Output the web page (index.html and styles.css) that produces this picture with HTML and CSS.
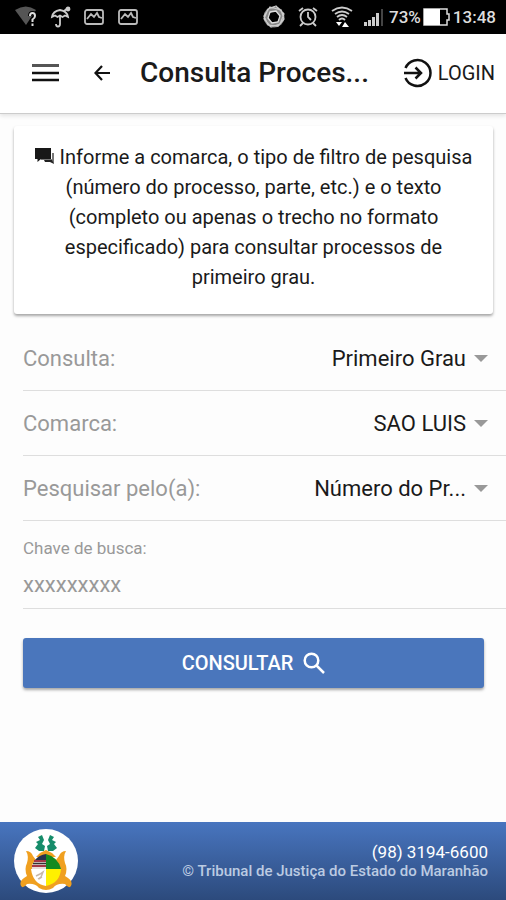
FILE: index.html
```html
<!DOCTYPE html>
<html lang="pt-BR">
<head>
    <meta charset="UTF-8">
    <meta name="viewport" content="width=device-width, initial-scale=1.0">
    <title>Consulta Processual</title>
    <link rel="stylesheet" href="styles.css">
</head>
<body>
    <div class="status-bar">
        <div class="status-left">
            <svg width="24" height="22" viewBox="0 0 24 22">
                <path d="M1 4 Q12 -3 22 4 L12 19 Z" fill="#555"/>
                <path d="M16 10 Q16 7 18.500 7 Q21 7 21 10 Q21 12 18.500 13.500 V16 M18.500 17.500 V20" fill="none" stroke="#000" stroke-width="4"/>
                <path d="M16 10 Q16 7 18.500 7 Q21 7 21 10 Q21 12 18.500 13.500 V16 M18.500 17.500 V20" fill="none" stroke="#ddd" stroke-width="2"/>
            </svg>
            <svg width="22" height="22" viewBox="0 0 22 22" fill="none" stroke="#ccc" stroke-width="1.800">
                <path d="M2 11 Q3 5 10 4 Q17 5 18 11 L15 9.500 L12.500 11 L10 9.500 L7.500 11 L5 9.500 Z"/>
                <path d="M10 10 V18 Q10 20.500 8 20.500 Q6 20.500 6 18 M14 5 L18 2"/>
                <circle cx="18" cy="3" r="1.500" fill="#ccc"/>
            </svg>
            <svg width="20" height="18" viewBox="0 0 20 18" fill="none" stroke="#bbb" stroke-width="1.800">
                <rect x="1" y="2" width="18" height="14" rx="2"/>
                <path d="M3 11 L7 6 L10 9 L13 5 L15 9 L18 10"/>
            </svg>
            <svg width="20" height="18" viewBox="0 0 20 18" fill="none" stroke="#bbb" stroke-width="1.800">
                <rect x="1" y="2" width="18" height="14" rx="2"/>
                <path d="M3 11 L7 6 L10 9 L13 5 L15 9 L18 10"/>
            </svg>
        </div>
        <div class="status-right">
            <svg width="24" height="24" viewBox="0 0 24 24" fill="none" stroke="#ccc">
                <circle cx="12" cy="12" r="8" stroke="#888" stroke-width="5"/>
                <path d="M8 2 L19 5 L22 14 L16 21 L6 20 L2 11 Z M14 1 L6 4 L2 14 L9 22 L18 19 L22 9 Z" stroke-width="1.200"/>
                <path d="M8 7 L14 6 L18 11 L16 17 L10 18 L6 13 Z" stroke="#ddd" stroke-width="1.300"/>
            </svg>
            <svg class="alarm" width="22" height="22" viewBox="0 0 22 22" fill="none" stroke="#ccc" stroke-width="1.800">
                <circle cx="11" cy="11" r="7.500"/>
                <path d="M11 6 V11 L14 14 M2 5 L6 2 M20 5 L16 2 M6 17 L3 20 M16 17 L19 20"/>
            </svg>
            <svg class="wifi" width="22" height="24" viewBox="0 0 22 24" fill="none" stroke="#ccc" stroke-width="1.800">
                <path d="M1 6 Q11 -1 21 6 M4 9 Q11 4 18 9 M6 12 Q11 8 16 12 M8 15 Q11 12 14 15"/>
                <path d="M5 17 H11 L8 21 Z M11 22 L14 17 L18 22 Z" fill="#fff" stroke="none"/>
            </svg>
            <svg class="signal" width="20" height="18" viewBox="0 0 20 18" fill="#ccc">
                <path d="M0 14 H3 V18 H0 Z M4 12 H7 V18 H4 Z M8 9 H11 V18 H8 Z M12 5 H15 V18 H12 Z"/>
                <path d="M17 1 H19 V18 H17 Z" fill="#444"/>
            </svg>
            <span class="battery-level">73%</span>
            <svg width="28" height="18" viewBox="0 0 28 18">
                <path d="M1 1 H24 V6 H26 V12 H24 V17 H1 Z" fill="none" stroke="#ddd" stroke-width="1.500"/>
                <path d="M1 1 H17 V17 H1 Z" fill="#fff"/>
            </svg>
            <span class="clock">13:48</span>
        </div>
    </div>

    <header class="header">
        <button class="icon-btn" aria-label="Menu">
            <svg width="27" height="20" viewBox="0 0 27 20">
                <path d="M0 2.500 H27" stroke="#555" stroke-width="3"/>
                <path d="M0 10 H27 M0 17 H27" stroke="#111" stroke-width="2.500"/>
            </svg>
        </button>
        <button class="icon-btn back-btn" aria-label="Voltar">
            <svg width="16" height="16" viewBox="0 0 16 16" fill="none" stroke="#111" stroke-width="2.200">
                <path d="M16 8 H1.500 M8 1 L1.500 8 L8 15"/>
            </svg>
        </button>
        <h1>Consulta Proces...</h1>
        <a class="login" href="#login">
            <svg width="30" height="30" viewBox="0 0 30 30" fill="none" stroke="#111" stroke-width="2.500">
                <path d="M2.500 10 A13 13 0 1 1 2.500 20 M1 15 H18 M12.500 9.500 L18 15 L12.500 20.500"/>
            </svg>
            LOGIN
        </a>
    </header>

    <main class="content">
        <div class="card">
            <p><svg width="20" height="16" viewBox="0 0 20 16">
                <path d="M6 12 H16 L19 16 V5 H17 V11 H6 Z" fill="#777"/>
                <path d="M0 0 H16 V11 H6 L2.500 14 V11 H0 Z" fill="#181818"/>
                <path d="M9 12 H17 L19 16 L15 14 H10 Z" fill="#222"/>
            </svg> Informe a comarca, o tipo de filtro de pesquisa (número do processo, parte, etc.) e o texto (completo ou apenas o trecho no formato especificado) para consultar processos de primeiro grau.</p>
        </div>

        <form class="form">
            <div class="row">
                <label for="consulta">Consulta:</label>
                <select id="consulta">
                    <option>Primeiro Grau</option>
                </select>
                <span class="arrow"></span>
            </div>
            <div class="row">
                <label for="comarca">Comarca:</label>
                <select id="comarca">
                    <option>SAO LUIS</option>
                </select>
                <span class="arrow"></span>
            </div>
            <div class="row">
                <label for="filtro">Pesquisar pelo(a):</label>
                <select id="filtro">
                    <option>Número do Pr...</option>
                </select>
                <span class="arrow"></span>
            </div>
            <div class="row row-input">
                <label for="chave">Chave de busca:</label>
                <input type="text" id="chave" placeholder="xxxxxxxxx">
            </div>

            <button type="button" class="submit-btn">
                CONSULTAR
                <svg width="22" height="22" viewBox="0 0 22 22" fill="none" stroke="#fff" stroke-width="2.500">
                    <circle cx="8.500" cy="8.500" r="6.800"/>
                    <path d="M13.500 13.500 L21 21"/>
                </svg>
            </button>
        </form>
    </main>

    <footer class="footer">
        <svg class="logo" width="64" height="64" viewBox="0 0 64 64">
            <circle cx="32" cy="32" r="32" fill="#fff"/>
            <path d="M12 22 Q17 22 19 27 L22 31 L42 31 L45 27 Q47 22 52 22 Q49 27 51 34 Q54 40 51 47 L54 49 Q59 52 57 57 Q55 60 51 55 Q43 54 39 59 Q32 63 25 59 Q21 54 13 55 Q9 60 7 57 Q5 52 10 49 L13 47 Q10 40 13 34 Q15 27 12 22 Z" fill="#f0a020"/>
            <path d="M22 28 L26 24 L32 21 L38 24 L42 28 Z" fill="#f0a020"/>
            <path d="M28 6 L24 8 L26 11 L22 13 L24 15 L21 19 L25 22 L30 22 L31 17 L28 15 L30 11 Z M36 6 L40 8 L38 11 L42 13 L40 15 L43 19 L39 22 L34 22 L33 17 L36 15 L34 11 Z" fill="#168c6a"/>
            <path d="M32 27 Q22 27 18 36 V41 H32 Z" fill="#e8dcdc"/>
            <path d="M20 32 H32 M18 37 H32" stroke="#a33848" stroke-width="2"/>
            <path d="M32 25 Q25 26 21 31 H32 Z" fill="#26324e"/>
            <path d="M19 34.500 H32" stroke="#333" stroke-width="1.500"/>
            <path d="M17 40 H32 V57 Q19 55 17 40 Z" fill="#fff"/>
            <path d="M22 47 L26 45 L29 43 L27 48 L24 50 M25 50 L28 48" stroke="#c8b8a8" stroke-width="1.500" fill="none"/>
            <path d="M32 25 Q44 28 47 40 H32 Z" fill="#138a20"/>
            <path d="M32 40 H47 Q46 54 32 57 Z" fill="#fff000"/>
        </svg>
        <div class="footer-text">
            <a class="phone" href="tel:+559831946600">(98) 3194-6600</a>
            <p>© Tribunal de Justiça do Estado do Maranhão</p>
        </div>
    </footer>
</body>
</html>
```

FILE: styles.css
```css
* {
    margin: 0;
    padding: 0;
    box-sizing: border-box;
}

body {
    font-family: Roboto, "Liberation Sans", sans-serif;
    background: #fdfdfd;
    color: #1a1a1a;
    min-height: 100vh;
    display: flex;
    flex-direction: column;
}

svg {
    flex-shrink: 0;
}

button, select, input {
    font-family: inherit;
    border: none;
    background: none;
}

a {
    color: inherit;
    text-decoration: none;
}

/* Android status bar */
.status-bar {
    height: 34px;
    padding: 0 10px 0 14px;
    background: #000;
    color: #ddd;
    display: flex;
    align-items: center;
    justify-content: space-between;
}

.status-left {
    display: flex;
    align-items: center;
    gap: 12px;
}

.status-left svg:last-child {
    margin-left: 2px;
}

.status-right {
    display: flex;
    align-items: center;
    font-size: 17px;
    font-weight: 500;
}

.alarm {
    margin-left: 11px;
}

.wifi {
    margin-left: 12px;
}

.signal {
    margin: 0 5px 0 11px;
}

.battery-level {
    margin-right: 2px;
}

.clock {
    margin-left: 2px;
}

/* Header */
.header {
    height: 80px;
    padding: 0 11px 2px 32px;
    background: #fff;
    border-bottom: 1px solid #ccc;
    box-shadow: 0 2px 4px rgba(0, 0, 0, 0.1);
    display: flex;
    align-items: center;
}

.icon-btn {
    display: flex;
    cursor: pointer;
}

.back-btn {
    margin-left: 35px;
}

.header h1 {
    flex: 1;
    margin-left: 30px;
    font-size: 28px;
    font-weight: 500;
    white-space: nowrap;
}

.login {
    display: flex;
    align-items: center;
    gap: 5px;
    font-size: 20px;
}

/* Content */
.content {
    flex: 1;
}

.card {
    margin: 12px 13px 12px 14px;
    padding: 16px 20px 22px;
    background: #fff;
    border-radius: 3px;
    box-shadow: 0 2px 3px rgba(0, 0, 0, 0.35);
    font-size: 20px;
    line-height: 30px;
    text-align: center;
}

.form {
    padding-left: 23px;
}

.row {
    height: 65px;
    padding-right: 18px;
    border-bottom: 1px solid #dedede;
    display: flex;
    align-items: center;
    font-size: 22px;
}

.row label {
    color: #999;
    white-space: nowrap;
}

.row select {
    flex: 1;
    min-width: 0;
    appearance: none;
    color: #1a1a1a;
    font-size: 22px;
    text-align-last: right;
}

.arrow {
    margin-left: 8px;
    border: 7px solid transparent;
    border-top-color: #999;
    border-bottom: none;
}

.row-input {
    height: 88px;
    padding-top: 6px;
    flex-direction: column;
    align-items: stretch;
    justify-content: center;
    gap: 14px;
}

.row-input label {
    font-size: 17px;
}

.row-input input {
    width: 100%;
    font-size: 22px;
    color: #1a1a1a;
    outline: none;
}

.row-input input::placeholder {
    color: #999;
}

.submit-btn {
    width: calc(100% - 22px);
    height: 50px;
    margin-top: 29px;
    background: #4a76bc;
    border-radius: 3px;
    box-shadow: 0 2px 3px rgba(0, 0, 0, 0.35);
    color: #fff;
    font-size: 20px;
    font-weight: 500;
    display: flex;
    align-items: center;
    justify-content: center;
    gap: 10px;
    cursor: pointer;
}

/* Footer */
.footer {
    height: 78px;
    padding: 0 18px 0 14px;
    background: linear-gradient(#4875bf, #2c4a7c);
    display: flex;
    align-items: center;
    justify-content: space-between;
}

.footer-text {
    text-align: right;
    font-size: 15px;
    font-weight: 500;
    color: #bccbe2;
}

.phone {
    font-size: 17px;
    font-weight: 400;
    color: #fff;
}
```
